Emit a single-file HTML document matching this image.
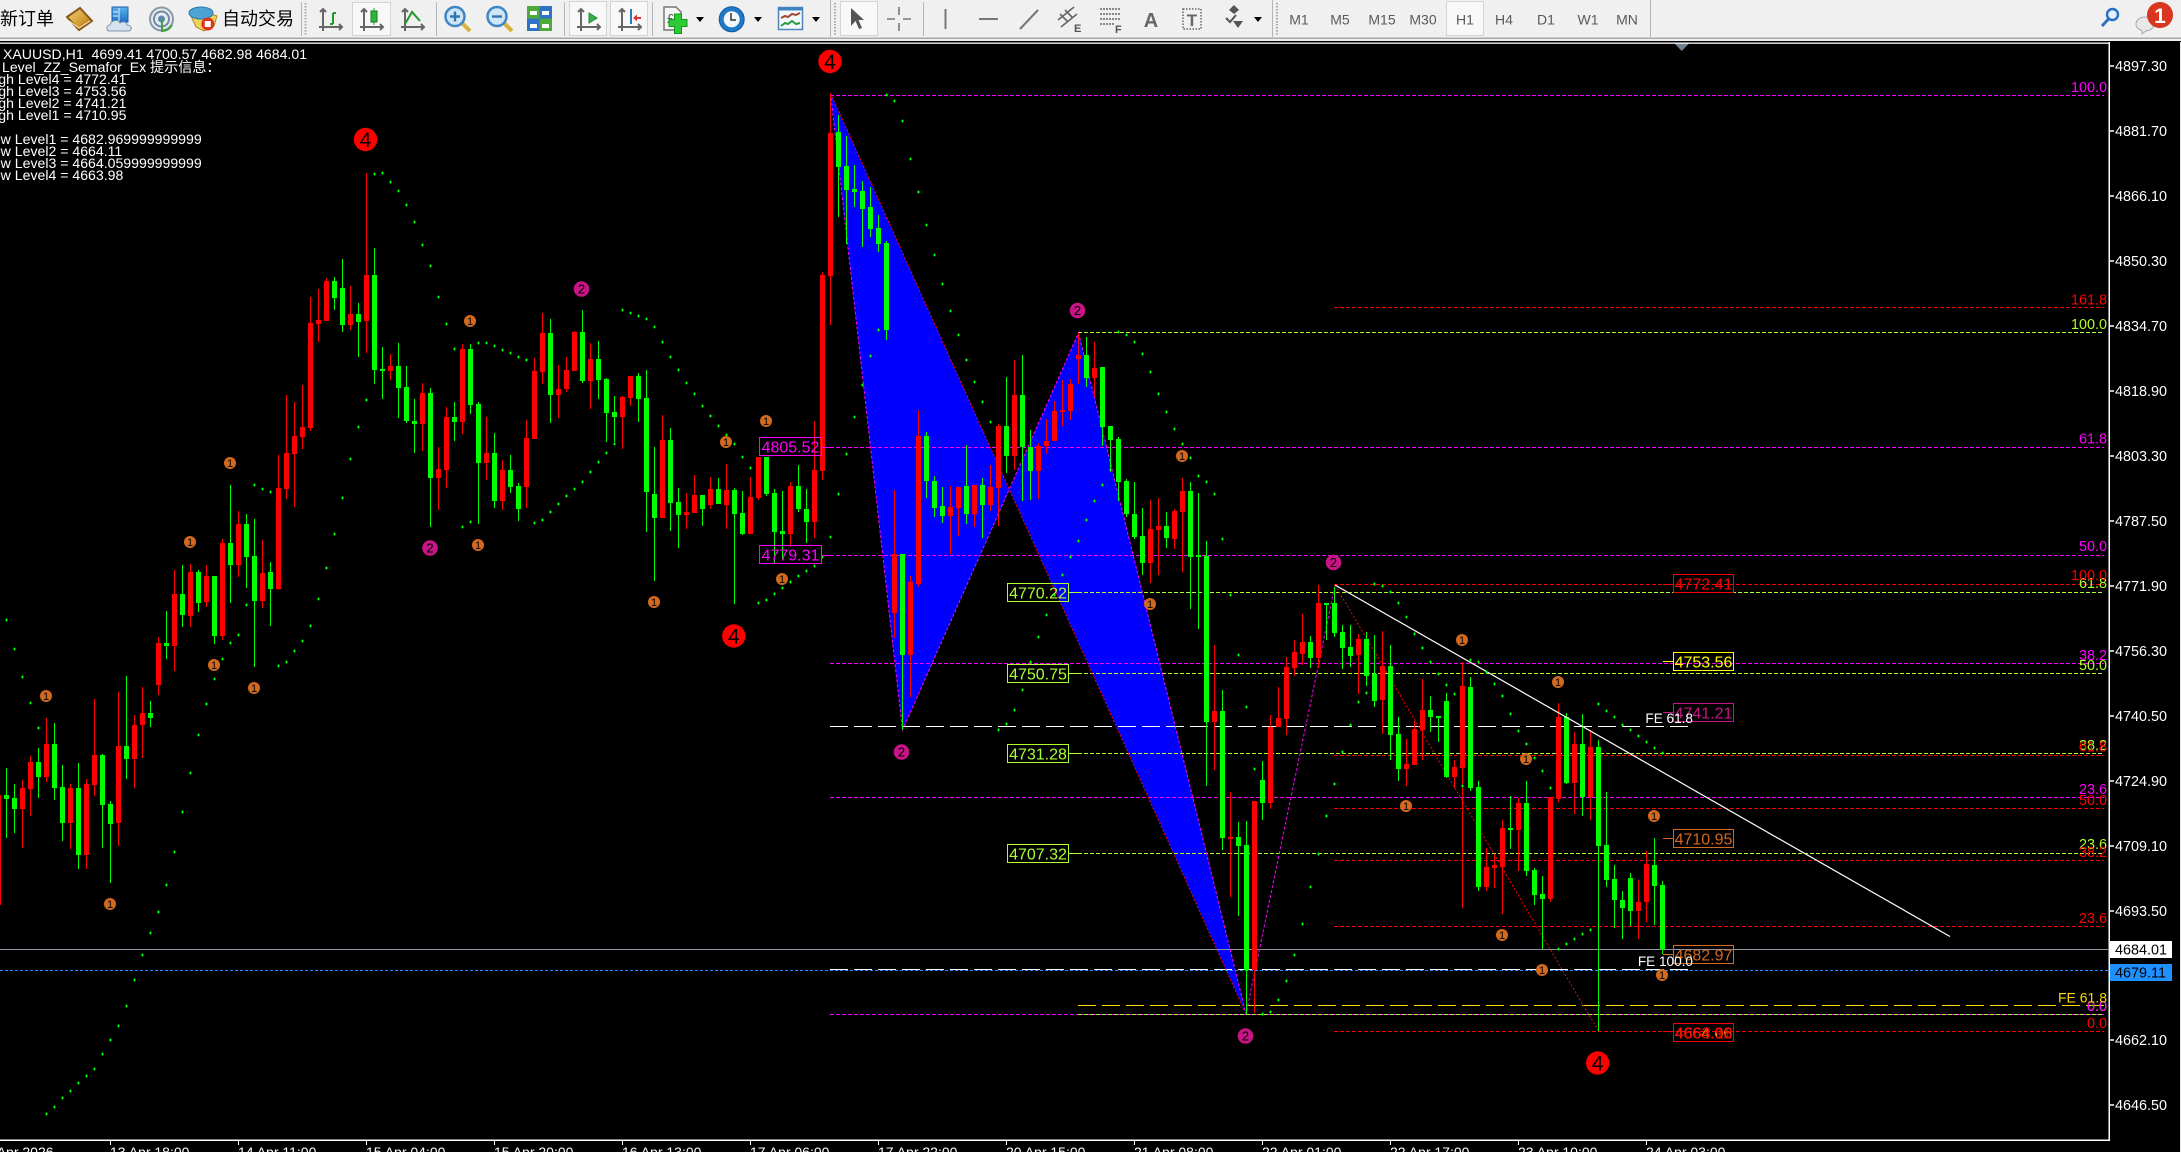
<!DOCTYPE html>
<html><head><meta charset="utf-8"><title>XAUUSD,H1</title>
<style>
html,body{margin:0;padding:0;background:#000;width:2181px;height:1152px;overflow:hidden}
svg{display:block;position:absolute;left:0;top:0}
text{font-family:"Liberation Sans","Noto Sans CJK SC",sans-serif}
.t{font-size:14.1px;fill:#fff}
.p{font-size:14.4px;fill:#fff}
.x{font-size:14px;fill:#fff}
.f{font-size:14.4px;text-anchor:end}
.b{font-size:16px;text-anchor:middle}
.c{font-size:15.5px;fill:#000}
.tf{font-size:14px;fill:#5a5a5a;text-anchor:middle}
.n1{font-size:11px;text-anchor:middle;fill:#000}
.n2{font-size:13px;text-anchor:middle;fill:#000}
.n4{font-size:21px;text-anchor:middle;fill:#000}
</style></head><body>
<svg width="2181" height="1152" viewBox="0 0 2181 1152" xmlns="http://www.w3.org/2000/svg">
<defs>
<marker id="pl" markerUnits="userSpaceOnUse" markerWidth="3" markerHeight="3" refX="1.5" refY="1.5" overflow="visible"><path d="M0 1.5H3M1.5 0V3" stroke="#00ff00" stroke-width="1" fill="none" shape-rendering="crispEdges"/></marker>
<linearGradient id="gold" x1="0" y1="0" x2="1" y2="1"><stop offset="0" stop-color="#f2d27a"/><stop offset=".6" stop-color="#d29a30"/><stop offset="1" stop-color="#8a5a1c"/></linearGradient>
<linearGradient id="blu" x1="0" y1="0" x2="0" y2="1"><stop offset="0" stop-color="#5db4ee"/><stop offset="1" stop-color="#1e6fc0"/></linearGradient>
<g id="ax"><path d="M-7 9V31M-11 27H12M-10 12l3-3 3 3M9 24l3 3-3 3" stroke="#666" stroke-width="2" fill="none"/></g>
</defs>

<!-- chart background -->
<rect width="2181" height="1152" fill="#000"/>

<!-- blue pattern -->
<polygon points="830.5,93 902.5,730 1078.5,333 1246,1014" fill="#0000ff"/>

<!-- levels -->
<g fill="none" stroke-width="1" shape-rendering="crispEdges">
<path stroke="#ff00ff" stroke-dasharray="4 2" d="M830 95.5H2104M830 447.5H2104M830 555.5H2104M830 663.5H2104M830 797.5H2104M830 1014.5H2104"/>
<path stroke="#adff2f" stroke-dasharray="4 2" d="M1078 332.5H2104M1078 592.5H2104M1078 673.5H2104M1078 753.5H2104M1078 853.5H2104M1078 1014.5H2104"/>
<path stroke="#ff0000" stroke-dasharray="4 2" d="M1334 307.5H2104M1334 584.5H2104M1334 755.5H2104M1334 808.5H2104M1334 860.5H2104M1334 926.5H2104M1334 1031.5H2104"/>
<path stroke="#ffd700" stroke-width="1" stroke-dasharray="18 6" d="M1078 1005.5H2104"/>
<path stroke="#fff" stroke-width="1" stroke-dasharray="18 6" d="M830 726.5H1688M830 969.5H1688"/>
<path stroke="#8f95a3" d="M0 949.5H2108"/>
<path stroke="#1e90ff" stroke-dasharray="3 2" d="M0 970.5H2108"/>
</g>
<g fill="none" stroke-width="1">
<path stroke="#ff00ff" stroke-dasharray="3 2" d="M830.5 93L902.5 730L1078.5 333L1246 1014L1335 585"/>
<path stroke="#ff0000" stroke-dasharray="2 2" d="M830.5 93L1246 1014M1335 585L1598.5 1031"/>
</g>

<!-- candles -->
<rect x="0" y="795" width="1" height="110" fill="#f00"/>
<g fill="none" shape-rendering="crispEdges">
<path stroke="#00ff00" stroke-width="1" d="M6.5 768V838M14.5 784V833M38.5 748V798M54.5 723V800M62.5 765V841M78.5 763V869M102.5 754V848M110.5 801V883M126.5 676V779M150.5 701V727M166.5 611V659M182.5 565V627M198.5 570V612M214.5 576V644M230.5 485V603M246.5 514V588M254.5 519V667M270.5 562V626M334.5 277V310M342.5 259V332M358.5 303V357M374.5 248V384M382.5 347V399M398.5 343V418M406.5 366V423M414.5 399V453M430.5 388V527M454.5 402V441M470.5 344V414M478.5 402V524M494.5 433V508M510.5 455V493M518.5 483V521M550.5 319V423M582.5 310V383M598.5 341V399M606.5 378V442M614.5 396V442M638.5 373V422M646.5 370V532M654.5 447V581M670.5 428V531M678.5 488V548M702.5 495V526M718.5 478V504M734.5 488V604M742.5 491V535M766.5 457V496M774.5 489V563M782.5 491V560M798.5 465V512M806.5 489V543M838.5 115V217M846.5 136V244M854.5 165V207M862.5 181V247M870.5 187V237M878.5 215V252M886.5 241V340M902.5 554V730M926.5 432V498M934.5 476V517M942.5 487V523M966.5 445V524M982.5 478V538M1006.5 377V473M1022.5 355V501M1030.5 430V500M1086.5 337V387M1102.5 367V446M1110.5 426V472M1118.5 437V501M1126.5 479V517M1134.5 482V539M1142.5 508V575M1166.5 512V548M1190.5 482V609M1198.5 493V629M1206.5 541V786M1222.5 690V850M1238.5 822V916M1246.5 821V1014M1262.5 761V820M1310.5 636V668M1326.5 603V640M1334.5 587V637M1342.5 625V669M1350.5 625V667M1366.5 632V686M1374.5 635V707M1390.5 645V760M1398.5 717V781M1430.5 696V732M1438.5 716V742M1446.5 693V778M1470.5 677V791M1478.5 781V891M1510.5 796V849M1526.5 781V876M1534.5 868V905M1542.5 876V949M1566.5 713V784M1582.5 714V816M1598.5 740V1031M1606.5 792V887M1614.5 865V928M1622.5 891V939M1630.5 873V926M1654.5 838V925M1662.5 881V954"/>
<path stroke="#ff0000" stroke-width="1" d="M22.5 780V848M30.5 756V816M46.5 718V782M70.5 784V849M86.5 779V869M94.5 699V796M118.5 692V846M134.5 715V788M142.5 687V758M158.5 637V695M174.5 570V671M190.5 564V627M206.5 565V607M222.5 539V640M238.5 511V577M262.5 540V608M278.5 455V590M286.5 395V499M294.5 402V507M302.5 385V449M310.5 297V431M318.5 289V342M326.5 278V321M350.5 286V330M366.5 173V353M390.5 354V380M422.5 383V451M438.5 447V510M446.5 407V488M462.5 344V434M486.5 417V480M502.5 460V510M526.5 420V508M534.5 358V439M542.5 313V384M558.5 365V418M566.5 357V392M574.5 331V371M590.5 343V409M622.5 396V449M630.5 376V406M662.5 415V518M686.5 493V529M694.5 475V513M710.5 477V509M726.5 464V529M750.5 477V534M758.5 457V500M790.5 482V547M814.5 421V538M822.5 272V480M830.5 94V325M894.5 490V638M910.5 576V697M918.5 410V587M950.5 486V554M958.5 487V536M974.5 485V527M990.5 465V511M998.5 424V526M1014.5 360V470M1038.5 443V499M1046.5 419V454M1054.5 401V441M1062.5 380V426M1070.5 379V420M1078.5 333V384M1094.5 342V397M1150.5 500V583M1158.5 498V575M1174.5 509V549M1182.5 478V572M1214.5 645V770M1230.5 792V897M1254.5 801V1013M1270.5 715V809M1278.5 687V727M1286.5 657V735M1294.5 640V676M1302.5 614V665M1318.5 585V668M1358.5 634V694M1382.5 631V734M1406.5 739V786M1414.5 721V765M1422.5 679V760M1454.5 760V788M1462.5 662V908M1486.5 848V891M1494.5 854V888M1502.5 820V914M1518.5 798V871M1550.5 797V902M1558.5 703V802M1574.5 732V814M1590.5 730V820M1638.5 880V939M1646.5 851V922"/>
<path stroke="#00ff00" stroke-width="5" d="M6.5 795V799M14.5 798V809M38.5 762V777M54.5 744V788M62.5 787V823M78.5 788V855M102.5 755V805M110.5 804V824M126.5 746V759M150.5 713V718M166.5 643V646M182.5 594V615M198.5 572V603M214.5 576V636M230.5 543V565M246.5 524V557M254.5 556V601M270.5 572V589M334.5 281V298M342.5 288V325M358.5 314V322M374.5 275V370M382.5 369V371M398.5 366V388M406.5 387V421M414.5 421V424M430.5 393V478M454.5 417V422M470.5 349V405M478.5 404V463M494.5 453V501M510.5 470V487M518.5 486V509M550.5 333V395M582.5 332V381M598.5 359V380M606.5 379V413M614.5 412V417M638.5 376V399M646.5 398V492M654.5 494V518M670.5 440V503M678.5 502V515M702.5 495V509M718.5 489V504M734.5 490V514M742.5 513V534M766.5 457V494M774.5 493V532M782.5 531V534M798.5 486V509M806.5 509V522M838.5 132V167M846.5 166V190M854.5 189V192M862.5 191V209M870.5 207V229M878.5 228V244M886.5 243V330M902.5 554V655M926.5 436V481M934.5 481V508M942.5 506V516M966.5 486V514M982.5 485V505M1006.5 426V456M1022.5 395V447M1030.5 447V471M1086.5 355V378M1102.5 367V427M1110.5 426V440M1118.5 439V482M1126.5 481V514M1134.5 514V537M1142.5 536V563M1166.5 526V538M1190.5 491V557M1198.5 555V557M1206.5 556V722M1222.5 711V838M1238.5 837V846M1246.5 845V970M1262.5 780V803M1310.5 642V658M1326.5 603V605M1334.5 603V633M1342.5 632V648M1350.5 647V656M1366.5 639V676M1374.5 674V701M1390.5 666V735M1398.5 734V769M1430.5 710V717M1438.5 716V718M1446.5 701V777M1470.5 687V788M1478.5 787V887M1510.5 828V830M1526.5 803V871M1534.5 870V895M1542.5 894V899M1566.5 717V783M1582.5 744V797M1598.5 747V846M1606.5 845V880M1614.5 879V900M1622.5 900V908M1630.5 878V911M1654.5 865V886M1662.5 885V949"/>
<path stroke="#ff0000" stroke-width="5" d="M22.5 788V809M30.5 762V789M46.5 744V777M70.5 788V823M86.5 784V855M94.5 755V785M118.5 746V823M134.5 725V759M142.5 713V725M158.5 643V685M174.5 594V646M190.5 572V616M206.5 576V602M222.5 543V636M238.5 524V565M262.5 573V601M278.5 488V589M286.5 453V489M294.5 436V454M302.5 427V437M310.5 323V428M318.5 320V324M326.5 281V321M350.5 314V325M366.5 275V321M390.5 366V371M422.5 393V424M438.5 469V478M446.5 417V470M462.5 349V422M486.5 453V463M502.5 470V501M526.5 438V487M534.5 371V439M542.5 333V372M558.5 389V395M566.5 370V389M574.5 332V371M590.5 359V381M622.5 397V417M630.5 376V398M662.5 440V518M686.5 512V515M694.5 495V513M710.5 489V505M726.5 490V505M750.5 497V534M758.5 457V498M790.5 486V534M814.5 470V522M822.5 275V471M830.5 133V276M894.5 554V613M910.5 582V655M918.5 436V584M950.5 507V516M958.5 487V508M974.5 485V514M990.5 487V505M998.5 426V488M1014.5 395V456M1038.5 446V471M1046.5 441V446M1054.5 411V441M1062.5 410V412M1070.5 384V411M1078.5 355V359M1094.5 368V378M1150.5 529V563M1158.5 526V530M1174.5 511V539M1182.5 491V512M1214.5 711V722M1230.5 837V839M1254.5 801V970M1270.5 727V803M1278.5 718V727M1286.5 667V719M1294.5 652V668M1302.5 642V654M1318.5 603V658M1358.5 639V655M1382.5 666V700M1406.5 764V769M1414.5 729V765M1422.5 710V730M1454.5 767V777M1462.5 686V768M1486.5 867V887M1494.5 865V868M1502.5 828V867M1518.5 803V830M1550.5 797V899M1558.5 717V799M1574.5 744V783M1590.5 747V797M1638.5 902V911M1646.5 864V902"/>
</g>

<!-- trend line -->
<path d="M1335 585L1950 936.5" stroke="#fff" stroke-width="1.2" fill="none"/>

<!-- SAR dots -->
<polyline fill="none" stroke="none" marker-start="url(#pl)" marker-mid="url(#pl)" marker-end="url(#pl)" points="6.5,620 14.5,649 22.5,677 30.5,703 38.5,728 46.5,1114 54.5,1107 62.5,1098 70.5,1091 78.5,1083 86.5,1076 94.5,1069 102.5,1054 110.5,1040 118.5,1026 126.5,1006 134.5,980 142.5,955 150.5,933 158.5,912 166.5,885 174.5,852 182.5,812 190.5,773 198.5,735 206.5,704 214.5,679 222.5,659 230.5,643 238.5,635 246.5,605 254.5,485 262.5,489 270.5,492 278.5,666 286.5,662 294.5,651 302.5,641 310.5,626 318.5,599 326.5,568 334.5,534 342.5,498 350.5,459 358.5,427 366.5,400 374.5,174 382.5,173 390.5,182 398.5,191 406.5,205 414.5,222 422.5,245 430.5,266 438.5,297 446.5,324 454.5,349 462.5,527 470.5,522 478.5,343 486.5,343 494.5,346 502.5,350 510.5,353 518.5,357 526.5,360 534.5,523 542.5,520 550.5,512 558.5,504 566.5,496 574.5,489 582.5,482 590.5,472 598.5,462 606.5,453 614.5,444 622.5,310 630.5,313 638.5,316 646.5,319 654.5,327 662.5,342 670.5,357 678.5,370 686.5,383 694.5,394 702.5,406 710.5,416 718.5,426 726.5,435 734.5,444 742.5,457 750.5,468 758.5,603 766.5,600 774.5,594 782.5,588 790.5,582 798.5,576 806.5,571 814.5,566 822.5,557 830.5,537 838.5,494 846.5,454 854.5,417 862.5,385 870.5,356 878.5,330 886.5,95 894.5,101 902.5,121 910.5,159 918.5,192 926.5,225 934.5,255 942.5,284 950.5,311 958.5,335 966.5,360 974.5,382 982.5,402 990.5,422 998.5,730 1006.5,724 1014.5,710 1022.5,690 1030.5,662 1038.5,637 1046.5,615 1054.5,595 1062.5,575 1070.5,557 1078.5,541 1086.5,520 1094.5,501 1102.5,485 1110.5,470 1118.5,332 1126.5,335 1134.5,342 1142.5,354 1150.5,372 1158.5,394 1166.5,412 1174.5,429 1182.5,444 1190.5,458 1198.5,476 1206.5,482 1214.5,494 1222.5,539 1230.5,595 1238.5,655 1246.5,707 1254.5,769 1262.5,1014 1270.5,1012 1278.5,1000 1286.5,981 1294.5,955 1302.5,924 1310.5,887 1318.5,854 1326.5,816 1334.5,784 1342.5,752 1350.5,725 1358.5,702 1366.5,693 1374.5,584 1382.5,586 1390.5,592 1398.5,603 1406.5,617 1414.5,634 1422.5,648 1430.5,662 1438.5,674 1446.5,685 1454.5,694 1462.5,786 1470.5,660 1478.5,662 1486.5,672 1494.5,684 1502.5,696 1510.5,714 1518.5,731 1526.5,744 1534.5,758 1542.5,771 1550.5,788 1558.5,949 1566.5,944 1574.5,939 1582.5,934 1590.5,930 1598.5,704 1606.5,711 1614.5,717 1622.5,725 1630.5,730 1638.5,736 1646.5,742 1654.5,748 1662.5,753"/>

<!-- semafor 1 -->
<g>
<g fill="#d2691e">
<circle cx="230" cy="463" r="6"/><circle cx="190" cy="542" r="6"/><circle cx="470" cy="321" r="6"/><circle cx="478" cy="545" r="6"/><circle cx="766" cy="421" r="6"/><circle cx="726" cy="442" r="6"/><circle cx="782" cy="579" r="6"/><circle cx="654" cy="602" r="6"/><circle cx="46" cy="696" r="6"/><circle cx="214" cy="665" r="6"/><circle cx="254" cy="688" r="6"/><circle cx="110" cy="904" r="6"/><circle cx="1182" cy="456" r="6"/><circle cx="1150" cy="604" r="6"/><circle cx="1406" cy="806" r="6"/><circle cx="1462" cy="640" r="6"/><circle cx="1558" cy="682" r="6"/><circle cx="1526" cy="759" r="6"/><circle cx="1654" cy="816" r="6"/><circle cx="1502" cy="935" r="6"/><circle cx="1542" cy="970" r="6"/><circle cx="1662" cy="975" r="6"/>
</g>
<g>
<text class="n1" x="230" y="467">1</text><text class="n1" x="190" y="546">1</text><text class="n1" x="470" y="325">1</text><text class="n1" x="478" y="549">1</text><text class="n1" x="766" y="425">1</text><text class="n1" x="726" y="446">1</text><text class="n1" x="782" y="583">1</text><text class="n1" x="654" y="606">1</text><text class="n1" x="46" y="700">1</text><text class="n1" x="214" y="669">1</text><text class="n1" x="254" y="692">1</text><text class="n1" x="110" y="908">1</text><text class="n1" x="1182" y="460">1</text><text class="n1" x="1150" y="608">1</text><text class="n1" x="1406" y="810">1</text><text class="n1" x="1462" y="644">1</text><text class="n1" x="1558" y="686">1</text><text class="n1" x="1526" y="763">1</text><text class="n1" x="1654" y="820">1</text><text class="n1" x="1502" y="939">1</text><text class="n1" x="1542" y="974">1</text><text class="n1" x="1662" y="979">1</text>
</g>
<g fill="#c71585">
<circle cx="581.5" cy="289" r="7.8"/><circle cx="430" cy="548" r="7.8"/><circle cx="1077.5" cy="310.5" r="7.8"/><circle cx="1333.5" cy="562.5" r="7.8"/><circle cx="901.5" cy="752" r="7.8"/><circle cx="1245.5" cy="1036" r="7.8"/>
</g>
<text class="n2" x="581.5" y="293.5">2</text><text class="n2" x="430" y="552.5">2</text><text class="n2" x="1077.5" y="315">2</text><text class="n2" x="1333.5" y="567">2</text><text class="n2" x="901.5" y="756.5">2</text><text class="n2" x="1245.5" y="1040.5">2</text>
<g fill="#ff0000">
<circle cx="365.5" cy="139.5" r="11.7"/><circle cx="830" cy="61.5" r="11.7"/><circle cx="733.8" cy="636" r="11.7"/><circle cx="1597.7" cy="1063" r="11.7"/>
</g>
<text class="n4" x="365.5" y="147">4</text><text class="n4" x="830" y="69">4</text><text class="n4" x="733.8" y="643.5">4</text><text class="n4" x="1597.7" y="1070.5">4</text>
</g>

<!-- left price boxes with connectors -->
<g fill="none" stroke-width="1" shape-rendering="crispEdges">
<path stroke="#ff00ff" d="M821 447.5H830M821 555.5H830"/>
<path stroke="#adff2f" d="M1068 592.5H1080M1068 673.5H1080M1068 753.5H1080M1068 853.5H1080"/>
<rect x="759.5" y="437.5" width="62" height="18" stroke="#ff00ff"/>
<rect x="759.5" y="545.5" width="62" height="18" stroke="#ff00ff"/>
<rect x="1007.5" y="583.5" width="61" height="18" stroke="#adff2f"/>
<rect x="1007.5" y="664.5" width="61" height="18" stroke="#adff2f"/>
<rect x="1007.5" y="744.5" width="61" height="18" stroke="#adff2f"/>
<rect x="1007.5" y="844.5" width="61" height="18" stroke="#adff2f"/>
<path stroke="#ff0000" d="M1663 584.5H1673M1663 1031.5H1673"/>
<path stroke="#ffff00" d="M1663 661.5H1673"/>
<path stroke="#c71585" d="M1663 712.5H1673"/>
<path stroke="#d2691e" d="M1663 838.5H1673M1663 954.5H1673"/>
<rect x="1673.5" y="574.5" width="60" height="18" stroke="#ff0000"/>
<rect x="1673.5" y="652.5" width="60" height="18" stroke="#ffff00"/>
<rect x="1673.5" y="703.5" width="60" height="18" stroke="#c71585"/>
<rect x="1673.5" y="829.5" width="60" height="18" stroke="#d2691e"/>
<rect x="1673.5" y="945.5" width="60" height="18" stroke="#d2691e"/>
<rect x="1673.5" y="1023.5" width="60" height="18" stroke="#ff0000"/>
</g>
<g>
<text class="b" x="790.5" y="452.5" fill="#ff00ff">4805.52</text>
<text class="b" x="790.5" y="560.5" fill="#ff00ff">4779.31</text>
<text class="b" x="1038" y="598.5" fill="#adff2f">4770.22</text>
<text class="b" x="1038" y="679.5" fill="#adff2f">4750.75</text>
<text class="b" x="1038" y="759.5" fill="#adff2f">4731.28</text>
<text class="b" x="1038" y="859.5" fill="#adff2f">4707.32</text>
<text class="b" x="1703.5" y="589.5" fill="#ff0000">4772.41</text>
<text class="b" x="1703.5" y="667.5" fill="#ffff00">4753.56</text>
<text class="b" x="1703.5" y="718.5" fill="#c71585">4741.21</text>
<text class="b" x="1703.5" y="844.5" fill="#d2691e">4710.95</text>
<text class="b" x="1703.5" y="960.5" fill="#d2691e">4682.97</text>
<text class="b" x="1703.5" y="1038.5" fill="#ffd700">4664.06</text>
<text class="b" x="1703.5" y="1038.5" fill="#ff0000" opacity=".8">4664.11</text>
<text class="b" x="1703.5" y="1038.5" fill="#ff0000">4663.98</text>
</g>

<!-- fib labels -->
<g>
<text class="f" x="2107" y="92" fill="#ff00ff">100.0</text>
<text class="f" x="2107" y="443.5" fill="#ff00ff">61.8</text>
<text class="f" x="2107" y="551" fill="#ff00ff">50.0</text>
<text class="f" x="2107" y="660" fill="#ff00ff">38.2</text>
<text class="f" x="2107" y="794" fill="#ff00ff">23.6</text>
<text class="f" x="2107" y="1011" fill="#adff2f">0.0</text>
<text class="f" x="2107" y="1011" fill="#ff00ff">0.0</text>
<text class="f" x="2107" y="329" fill="#adff2f">100.0</text>
<text class="f" x="2107" y="588" fill="#adff2f">61.8</text>
<text class="f" x="2107" y="670" fill="#adff2f">50.0</text>
<text class="f" x="2107" y="750" fill="#adff2f">38.2</text>
<text class="f" x="2107" y="849" fill="#adff2f">23.6</text>
<text class="f" x="2107" y="304.5" fill="#ff0000">161.8</text>
<text class="f" x="2107" y="580" fill="#ff0000">100.0</text>
<text class="f" x="2107" y="751.5" fill="#ff0000">61.8</text>
<text class="f" x="2107" y="805" fill="#ff0000">50.0</text>
<text class="f" x="2107" y="857" fill="#ff0000">38.2</text>
<text class="f" x="2107" y="923" fill="#ff0000">23.6</text>
<text class="f" x="2107" y="1028" fill="#ff0000">0.0</text>
<text class="f" x="2107" y="1002.5" fill="#ffd700" style="font-size:14px">FE 61.8</text>
<text class="f" x="1693" y="723" fill="#fff" style="font-size:13.6px">FE 61.8</text>
<text class="f" x="1693" y="966" fill="#fff" style="font-size:13.6px">FE 100.0</text>
</g>

<!-- info text -->
<g>
<text class="t" x="3" y="59">XAUUSD,H1&#160;&#160;4699.41 4700.57 4682.98 4684.01</text>
<text class="t" x="2" y="72">Level_ZZ_Semafor_Ex 提示信息：</text>
<text class="t" x="-15" y="84">High Level4 = 4772.41</text>
<text class="t" x="-15" y="96">High Level3 = 4753.56</text>
<text class="t" x="-15" y="108">High Level2 = 4741.21</text>
<text class="t" x="-15" y="120">High Level1 = 4710.95</text>
<text class="t" x="-15" y="144">Low Level1 = 4682.969999999999</text>
<text class="t" x="-15" y="156">Low Level2 = 4664.11</text>
<text class="t" x="-15" y="168">Low Level3 = 4664.059999999999</text>
<text class="t" x="-15" y="180">Low Level4 = 4663.98</text>
</g>

<!-- top marker -->
<polygon points="1674,43 1689.5,43 1681.7,51" fill="#708090"/>

<!-- price axis -->
<rect x="2108.5" y="42" width="1.5" height="1099" fill="#fff"/>
<rect x="0" y="1139.5" width="2110" height="1.5" fill="#fff"/>
<path stroke="#fff" stroke-width="1.5" fill="none" d="M2110 66H2114M2110 131H2114M2110 196H2114M2110 261H2114M2110 326H2114M2110 391H2114M2110 456H2114M2110 521H2114M2110 586H2114M2110 651H2114M2110 716H2114M2110 781H2114M2110 846H2114M2110 911H2114M2110 1040H2114M2110 1105H2114"/>
<g>
<text class="p" x="2115" y="71">4897.30</text>
<text class="p" x="2115" y="136">4881.70</text>
<text class="p" x="2115" y="201">4866.10</text>
<text class="p" x="2115" y="266">4850.30</text>
<text class="p" x="2115" y="331">4834.70</text>
<text class="p" x="2115" y="396">4818.90</text>
<text class="p" x="2115" y="461">4803.30</text>
<text class="p" x="2115" y="526">4787.50</text>
<text class="p" x="2115" y="591">4771.90</text>
<text class="p" x="2115" y="656">4756.30</text>
<text class="p" x="2115" y="721">4740.50</text>
<text class="p" x="2115" y="786">4724.90</text>
<text class="p" x="2115" y="851">4709.10</text>
<text class="p" x="2115" y="916">4693.50</text>
<text class="p" x="2115" y="1045">4662.10</text>
<text class="p" x="2115" y="1110">4646.50</text>
</g>
<rect x="2110" y="941" width="62" height="17" fill="#fff"/>
<text class="p" x="2115" y="954.5" style="fill:#000">4684.01</text>
<rect x="2110" y="964" width="62" height="17" fill="#1e90ff"/>
<text class="p" x="2115" y="977.5" style="fill:#000">4679.11</text>
<rect x="2180" y="42" width="1" height="1110" fill="#e8e8e8"/>

<!-- time axis -->
<path stroke="#fff" fill="none" d="M110.5 1140V1145M238.5 1140V1145M366.5 1140V1145M494.5 1140V1145M622.5 1140V1145M750.5 1140V1145M878.5 1140V1145M1006.5 1140V1145M1134.5 1140V1145M1262.5 1140V1145M1390.5 1140V1145M1518.5 1140V1145M1646.5 1140V1145"/>
<g>
<text class="x" x="-22" y="1157">10 Apr 2026</text>
<text class="x" x="110" y="1157">13 Apr 18:00</text>
<text class="x" x="238" y="1157">14 Apr 11:00</text>
<text class="x" x="366" y="1157">15 Apr 04:00</text>
<text class="x" x="494" y="1157">15 Apr 20:00</text>
<text class="x" x="622" y="1157">16 Apr 13:00</text>
<text class="x" x="750" y="1157">17 Apr 06:00</text>
<text class="x" x="878" y="1157">17 Apr 22:00</text>
<text class="x" x="1006" y="1157">20 Apr 15:00</text>
<text class="x" x="1134" y="1157">21 Apr 08:00</text>
<text class="x" x="1262" y="1157">22 Apr 01:00</text>
<text class="x" x="1390" y="1157">22 Apr 17:00</text>
<text class="x" x="1518" y="1157">23 Apr 10:00</text>
<text class="x" x="1646" y="1157">24 Apr 03:00</text>
</g>

<!-- toolbar -->
<rect x="0" y="0" width="2181" height="41" fill="#f0f0f0"/>
<rect x="0" y="37.5" width="2181" height="1.5" fill="#a9a9a9"/>
<rect x="0" y="42.5" width="2109" height="1.3" fill="#fff"/>

<text class="c" x="0" y="25" style="font-size:18px">新订单</text>
<!-- book -->
<polygon points="67,17 80,8 92,21 79,30" fill="url(#gold)" stroke="#8a5a1c" stroke-width="2"/>
<path d="M69 21L79 28L90 21" stroke="#fff3c9" fill="none"/>
<!-- doc + cloud -->
<rect x="112" y="7" width="16" height="15" fill="url(#blu)" stroke="#1a5fa8"/>
<path d="M119 8V21M113 12h5M113 16h5" stroke="#dff1ff"/>
<path d="M109 31c-3 0-3-6 1-6 1-5 8-6 10-2 3-2 7-1 7 2 5 0 6 6 1 6z" fill="#d7e2ef" stroke="#7d93ad"/>
<!-- radar -->
<circle cx="161.5" cy="19" r="11.5" fill="#e8ecef" stroke="#8a9aa8" stroke-width="2"/>
<circle cx="161.5" cy="19" r="7.5" fill="none" stroke="#6f8aa6" stroke-width="2"/>
<circle cx="161.5" cy="19" r="3.5" fill="#5d86b5"/>
<path d="M162 19V31A12 12 0 0 0 172 25" stroke="#3fa03f" stroke-width="2" fill="none"/>
<!-- auto trading -->
<path d="M191 16l20-2 6 2-3 10-10 5-8-4z" fill="#f1d25a" stroke="#b08a2a"/>
<ellipse cx="201" cy="13" rx="12" ry="6" fill="#4da3d6" stroke="#2a78a8"/>
<circle cx="207.8" cy="24" r="6.5" fill="#e0341c"/>
<rect x="204.8" y="21" width="6" height="6" fill="#fff"/>
<text class="c" x="222" y="25" style="font-size:18px">自动交易</text>

<path d="M301.5 2V36" stroke="#b5b5b5"/>
<path d="M305.5 3V36" stroke="#aaa" stroke-width="2" stroke-dasharray="1.5 1.5" fill="none"/>

<use href="#ax" x="330"/>
<path d="M333 13V24M333 13h3M333 24h-3" stroke="#1d9a2a" stroke-width="2" fill="none"/>

<rect x="352.5" y="2.5" width="38" height="33" fill="#f8f8f8" stroke="#d4d4d4"/>
<use href="#ax" x="371"/>
<path d="M374 8V25" stroke="#1d9a2a"/><rect x="371" y="11" width="6" height="11" fill="#2fb43c" stroke="#167a22"/>

<use href="#ax" x="412"/>
<path d="M405 24L412 12L420 21" stroke="#1d9a2a" stroke-width="2" fill="none"/>

<path d="M436.5 2V36" stroke="#b5b5b5"/>

<!-- zoom in/out -->
<path d="M462 23L470 31" stroke="#d9b13a" stroke-width="4"/>
<circle cx="455" cy="16.5" r="9.5" fill="#cfe6f7" stroke="#3f86c4" stroke-width="2.5"/>
<path d="M450 16.5h10M455 11.5v10" stroke="#3075b0" stroke-width="2.4"/>
<path d="M504 23L512 31" stroke="#d9b13a" stroke-width="4"/>
<circle cx="497" cy="16.5" r="9.5" fill="#cfe6f7" stroke="#3f86c4" stroke-width="2.5"/>
<path d="M492 16.5h10" stroke="#3075b0" stroke-width="2.4"/>

<!-- tile -->
<rect x="527" y="6" width="12.5" height="12.5" fill="#4ea83a"/><rect x="539.5" y="6" width="12.5" height="12.5" fill="#2f73c8"/>
<rect x="527" y="18.5" width="12.5" height="12.5" fill="#2f73c8"/><rect x="539.5" y="18.5" width="12.5" height="12.5" fill="#4ea83a"/>
<path d="M530 11h7v4h-7zM542 11h7v4h-7zM530 24h7v4h-7zM542 24h7v4h-7z" fill="#fff"/>

<path d="M564.5 2V36" stroke="#b5b5b5"/>

<rect x="569.5" y="1.5" width="37" height="34" fill="#f8f8f8" stroke="#d4d4d4"/>
<use href="#ax" x="588"/>
<polygon points="589,13 597,18 589,23" fill="#35b04a" stroke="#1d8a30"/>
<rect x="610.5" y="1.5" width="37" height="34" fill="#f8f8f8" stroke="#d4d4d4"/>
<use href="#ax" x="629"/>
<path d="M631 9V24" stroke="#2b79b8" stroke-width="2"/>
<path d="M633 18l4-3.5v2.5h4v2h-4v2.5z" fill="#d33"/>

<path d="M652.5 2V36" stroke="#b5b5b5"/>

<!-- new -->
<path d="M664 7h12l5 5v18h-17z" fill="#f5f5f5" stroke="#777" stroke-width="1.5"/>
<text x="667" y="23" style="font-size:13px;fill:#555">£</text>
<path d="M674.5 14h7v5.500h5.500v7h-5.500v7h-7v-7h-5.500v-7h5.500z" fill="#2ecb36" stroke="#14941c"/>
<polygon points="696,17 704,17 700,22" fill="#000"/>

<!-- clock -->
<circle cx="731.7" cy="19.3" r="12.5" fill="#1f78c8" stroke="#0f5aa0"/>
<circle cx="731.7" cy="19.3" r="8" fill="#f4f8fb"/>
<path d="M731 13V20H736" stroke="#333" stroke-width="1.5" fill="none"/>
<polygon points="754,17 762,17 758,22" fill="#000"/>

<!-- indicators -->
<rect x="778.5" y="7.5" width="24" height="22" fill="#f4f8fc" stroke="#4e86bb" stroke-width="1.5"/>
<rect x="778.5" y="7.5" width="24" height="3" fill="#3e82c4"/>
<path d="M781 18l4-2 3 1 4-3 4 1 4-2" stroke="#a6432b" stroke-width="2" fill="none"/>
<path d="M781 26l4-3 3 1 4-3 4 3 4-1" stroke="#2e9a40" stroke-width="2" fill="none"/>
<polygon points="812,17 820,17 816,22" fill="#000"/>

<path d="M830.5 0V37" stroke="#b5b5b5"/>
<path d="M835 3V36" stroke="#aaa" stroke-width="2" stroke-dasharray="1.5 1.5" fill="none"/>

<rect x="840.5" y="1.5" width="37" height="34" fill="#f8f8f8" stroke="#d4d4d4"/>
<polygon points="851,8 864,20 858.5,20 862,28 859,29 855.5,21 851,26" fill="#555"/>
<path d="M887 19h8M903 19h8M899 7v8M899 23v8" stroke="#777" stroke-width="1.6"/>
<path d="M923.5 2V36" stroke="#b5b5b5"/>
<path d="M945.5 9V29" stroke="#777" stroke-width="2"/>
<path d="M979 19H998" stroke="#777" stroke-width="2"/>
<path d="M1020 29L1038 10" stroke="#777" stroke-width="2"/>
<path d="M1058 20L1074 7M1061 27L1077 14M1060 14l8 8M1065 10l8 8" stroke="#666" stroke-width="1.6"/>
<text x="1074" y="32" style="font-size:11px;font-weight:bold;fill:#555">E</text>
<path d="M1100 9h21M1100 14h21M1100 19h21M1100 24h14" stroke="#666" stroke-width="1.5" stroke-dasharray="2 1"/>
<text x="1115" y="33" style="font-size:11px;font-weight:bold;fill:#555">F</text>
<text x="1151" y="27" style="font-size:20px;font-weight:bold;fill:#666;text-anchor:middle">A</text>
<rect x="1183" y="9" width="18" height="20" fill="none" stroke="#666" stroke-width="1.5" stroke-dasharray="1.5 1.5"/>
<text x="1192" y="26" style="font-size:17px;font-weight:bold;fill:#666;text-anchor:middle">T</text>
<polygon points="1229,10 1234,5 1239,10 1234,14" fill="#555"/>
<polygon points="1233,21 1243,21 1238,28" fill="#555"/>
<path d="M1226 18l4 4 6-7" stroke="#555" stroke-width="2" fill="none"/>
<polygon points="1254,17 1262,17 1258,22" fill="#000"/>
<path d="M1272.5 0V37" stroke="#b5b5b5"/>
<path d="M1277 3V36" stroke="#aaa" stroke-width="2" stroke-dasharray="1.5 1.5" fill="none"/>

<rect x="1446.5" y="1.5" width="37" height="34" fill="#f8f8f8" stroke="#d4d4d4"/>
<g>
<text class="tf" x="1299" y="24.5">M1</text>
<text class="tf" x="1340" y="24.5">M5</text>
<text class="tf" x="1382" y="24.5">M15</text>
<text class="tf" x="1423" y="24.5">M30</text>
<text class="tf" x="1465" y="24.5">H1</text>
<text class="tf" x="1504" y="24.5">H4</text>
<text class="tf" x="1546" y="24.5">D1</text>
<text class="tf" x="1588" y="24.5">W1</text>
<text class="tf" x="1627" y="24.5">MN</text>
</g>
<path d="M1650.5 0V37" stroke="#b5b5b5"/>

<!-- search -->
<circle cx="2112.5" cy="14.5" r="5.5" fill="#e4f0fb" stroke="#2a6fc0" stroke-width="2.4"/>
<path d="M2108.5 19L2102 26" stroke="#2a6fc0" stroke-width="3"/>
<!-- notification -->
<ellipse cx="2145" cy="24" rx="9" ry="7" fill="#e8e8e8" stroke="#aaa"/>
<path d="M2142 30v4l5-4" fill="#e8e8e8" stroke="#aaa"/>
<circle cx="2160" cy="15" r="13" fill="#d9351f"/>
<text x="2160" y="23" style="font-size:21px;font-weight:bold;fill:#fff;text-anchor:middle">1</text>
</svg>
</body></html>
